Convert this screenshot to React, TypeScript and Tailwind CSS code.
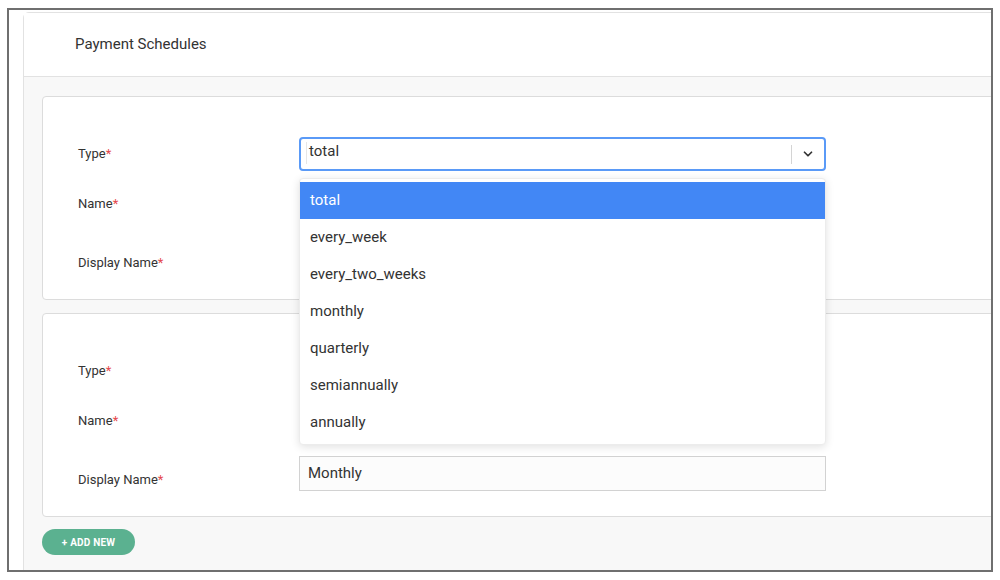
import React from 'react';

const options = ['total', 'every_week', 'every_two_weeks', 'monthly', 'quarterly', 'semiannually', 'annually'];

const Label = ({ text, className = '' }: { text: string; className?: string }) => (
  <div className={`w-[221px] shrink-0 text-[13px] leading-4 text-[#333] ${className}`}>
    {text}
    <span className="text-[#e5484d]">*</span>
  </div>
);

const Chevron = () => (
  <svg width="14" height="14" viewBox="0 0 24 24" fill="none" stroke="#333" strokeWidth="3" strokeLinecap="round" strokeLinejoin="round">
    <path d="M6 9l6 6 6-6" />
  </svg>
);

const TypeSelect = ({ open, value }: { open?: boolean; value: string }) => (
  <div className="relative w-[527px]">
    <div
      className={`flex h-[34px] items-center rounded-[4px] bg-white ${
        open ? 'border-2 border-[#5a9af7]' : 'border border-[#cfcfcf]'
      }`}
    >
      <div className="relative flex-1 pb-[6px] pl-[8px] text-[15px] text-[#333]">
        {open && <span className="absolute left-[5px] top-[2px] h-[22px] w-px bg-[#e6e6e6]" />}
        {value}
      </div>
      <div className="h-[19px] w-px bg-[#d4d4d4]" />
      <div className="flex w-[32px] justify-center">
        <Chevron />
      </div>
    </div>
    {open && (
      <div className="absolute left-0 top-[41px] z-10 w-[527px] rounded-[4px] border border-[#ececec] bg-white py-[3px] shadow-[0_2px_8px_rgba(0,0,0,0.12)]">
        {options.map((o, i) => (
          <div
            key={o}
            className={`flex h-[37px] items-center px-[10px] text-[15px] ${
              i === 0 ? 'bg-[#4287f5] text-white' : 'text-[#333]'
            }`}
          >
            {o}
          </div>
        ))}
      </div>
    )}
  </div>
);

const TextInput = ({ value = '' }: { value?: string }) => (
  <div className="flex h-[35px] w-[527px] items-center border border-[#d2d2d2] bg-[#fcfcfc] px-[8px] text-[15px] text-[#333]">
    {value}
  </div>
);

// values hidden under the open menu are left blank
const ScheduleCard = ({ open, typeValue, nameValue, displayValue }: { open?: boolean; typeValue: string; nameValue: string; displayValue: string }) => (
  <div className="h-[204px] rounded-[4px] border border-[#dcdcdc] bg-white pl-[35px] pt-[40px]">
    <div className={`relative flex h-[34px] items-center ${open ? 'z-10' : ''}`}>
      <Label text="Type" />
      <TypeSelect open={open} value={typeValue} />
    </div>
    <div className="mt-[16px] flex h-[34px] items-center">
      <Label text="Name" />
      <TextInput value={nameValue} />
    </div>
    <div className="mt-[18px] flex items-start">
      <Label text="Display Name" className="mt-[16px]" />
      <TextInput value={displayValue} />
    </div>
  </div>
);

export default function App() {
  return (
    <div className="h-[580px] w-[1000px] bg-white pl-[7px] pt-[8px] font-['Roboto','Liberation_Sans',sans-serif]">
      <div className="h-[564px] w-[986px] overflow-hidden border-2 border-[#6f6f6f] bg-white pl-[14px] pt-[2px]">
        <div className="h-[600px] w-[1100px] rounded-tl-[6px] border border-[#e2e2e2]">
          <div className="flex h-[64px] items-center border-b border-[#e2e2e2] bg-white pl-[51px] text-[15px] text-[#333]">
            Payment Schedules
          </div>
          <div className="bg-[#f8f8f8] pl-[18px] pt-[19px] pb-[40px]">
            <ScheduleCard open typeValue="total" nameValue="" displayValue="" />
            <div className="mt-[13px]">
              <ScheduleCard typeValue="" nameValue="" displayValue="Monthly" />
            </div>
            <button className="mt-[12px] flex h-[26px] w-[93px] items-center justify-center rounded-full bg-[#5bb190] text-[10px] font-bold tracking-[0.2px] text-white">
              + ADD NEW
            </button>
          </div>
        </div>
      </div>
    </div>
  );
}
